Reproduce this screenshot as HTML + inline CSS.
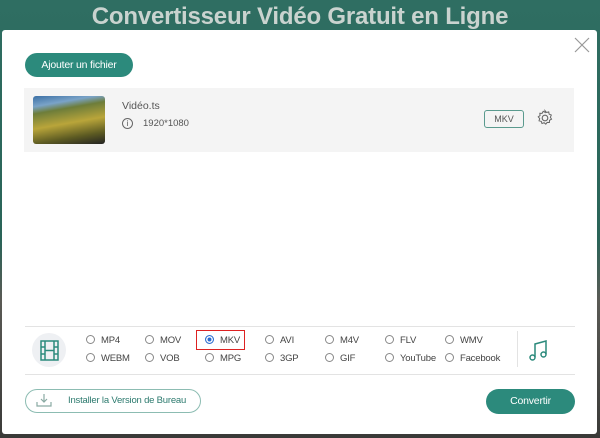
<html><head><style>
body{margin:0;width:600px;height:438px;overflow:hidden;background:linear-gradient(#2f6e62,#2a6458 240px,#5a5a55 300px,#3a3a38);font-family:"Liberation Sans",sans-serif;position:relative}
.title{position:absolute;top:3px;left:0;width:600px;text-align:center;color:#c9d3cf;font-size:24px;font-weight:bold;letter-spacing:-0.2px}
.modal{position:absolute;left:2px;top:30px;width:595px;height:404px;background:#fff;border-radius:3px}
.btn{position:absolute;background:#2c8a7c;color:#fff;font-size:10.5px;text-align:center;border-radius:14px;letter-spacing:-0.2px}
.row{position:absolute;left:22px;top:58px;width:550px;height:64px;background:#f4f4f4}
.g{color:#555;font-size:9.5px;position:absolute}
.r{position:absolute;font-size:9.5px;color:#444;letter-spacing:-0.2px}
.r:before{content:"";display:inline-block;width:7px;height:7px;border:1px solid #888;border-radius:50%;margin-right:6px;vertical-align:-1px}
.r.on:before{background:#2a6bd0;box-shadow:inset 0 0 0 1.5px #fff;border-color:#2a6bd0}
</style></head><body>
<div class="title">Convertisseur Vidéo Gratuit en Ligne</div>
<div class="modal">
<svg style="position:absolute;left:572px;top:7px" width="16" height="16"><path d="M1 1L15 15M15 1L1 15" stroke="#999" stroke-width="1.2"/></svg>
<div class="btn" style="left:23px;top:23px;width:108px;height:24px;line-height:24px">Ajouter un fichier</div>
<div class="row">
<div style="position:absolute;left:9px;top:8px;width:72px;height:48px;border-radius:3px;background:linear-gradient(170deg,#3b6fa5 0,#7aa3c8 18%,#6d7d3a 30%,#b9a53a 55%,#5c5a22 80%,#222 100%)"></div>
<div class="g" style="left:98px;top:12px;font-size:10.5px">Vidéo.ts</div>
<div class="g" style="left:98px;top:30px"><span style="display:inline-block;width:9px;height:9px;border:1px solid #666;border-radius:50%;text-align:center;font-size:8px;line-height:9px;margin-right:10px">i</span>1920*1080</div>
<div style="position:absolute;left:460px;top:22px;width:38px;height:16px;border:1px solid #5a9a8e;border-radius:3px;font-size:9px;color:#555;text-align:center;line-height:16px">MKV</div>
<svg style="position:absolute;left:512px;top:21px" width="18" height="18" viewBox="0 0 16 16"><circle cx="8" cy="8" r="2.5" fill="none" stroke="#666"/><path d="M8 1.5l1.3 1.6 2-.5.4 2 1.9.8-.8 1.9 1 1.7-1.8 1-.1 2-2-.1-1.2 1.6-1.5-1.3-1.9.7-.6-1.9-2-.5.6-2-1.3-1.5 1.6-1.2-.2-2 2 .1 1-1.8 1.8 1z" fill="none" stroke="#666" stroke-width="0.9"/></svg>
</div>
<div style="position:absolute;left:23px;top:296px;width:550px;height:1px;background:#e3e3e3"></div>
<div style="position:absolute;left:23px;top:344px;width:550px;height:1px;background:#e3e3e3"></div>
<div style="position:absolute;left:30px;top:303px;width:34px;height:34px;border-radius:50%;background:#eef0f3"></div>
<svg style="position:absolute;left:38px;top:310px" width="19" height="21"><rect x="1" y="1" width="17" height="19" fill="none" stroke="#2c8a7c" stroke-width="1.5"/><path d="M5 1v19M14 1v19M1 7h4M1 14h4M14 7h4M14 14h4M5 10.5h9" stroke="#2c8a7c" stroke-width="1.5"/></svg>
<div style="position:absolute;left:194px;top:300px;width:47px;height:18px;border:1.5px solid #d22"></div>
<div class="r" style="left:84px;top:305px">MP4</div><div class="r" style="left:143px;top:305px">MOV</div><div class="r on" style="left:203px;top:305px">MKV</div><div class="r" style="left:263px;top:305px">AVI</div><div class="r" style="left:323px;top:305px">M4V</div><div class="r" style="left:383px;top:305px">FLV</div><div class="r" style="left:443px;top:305px">WMV</div>
<div class="r" style="left:84px;top:323px">WEBM</div><div class="r" style="left:143px;top:323px">VOB</div><div class="r" style="left:203px;top:323px">MPG</div><div class="r" style="left:263px;top:323px">3GP</div><div class="r" style="left:323px;top:323px">GIF</div><div class="r" style="left:383px;top:323px">YouTube</div><div class="r" style="left:443px;top:323px">Facebook</div>
<div style="position:absolute;left:515px;top:301px;width:1px;height:36px;background:#e3e3e3"></div>
<svg style="position:absolute;left:527px;top:310px" width="20" height="22"><path d="M6 17V4l11-3v13" fill="none" stroke="#2c8a7c" stroke-width="1.5"/><circle cx="3.5" cy="17.5" r="2.5" fill="none" stroke="#2c8a7c" stroke-width="1.5"/><circle cx="14.5" cy="14.5" r="2.5" fill="none" stroke="#2c8a7c" stroke-width="1.5"/></svg>
<div style="position:absolute;left:23px;top:359px;width:174px;height:22px;border:1px solid #8cbcb2;border-radius:12px"><svg style="position:absolute;left:10px;top:3px" width="16" height="15"><path d="M8 1v8M5 6l3 3 3-3M1 9v4h14V9" fill="none" stroke="#8aaaa3" stroke-width="1.2"/></svg><span style="position:absolute;left:42px;top:5px;font-size:9.5px;color:#2c7a6e;letter-spacing:-0.2px;white-space:nowrap">Installer la Version de Bureau</span></div>
<div class="btn" style="left:484px;top:359px;width:89px;height:25px;line-height:25px">Convertir</div>
</div>
</body></html>
